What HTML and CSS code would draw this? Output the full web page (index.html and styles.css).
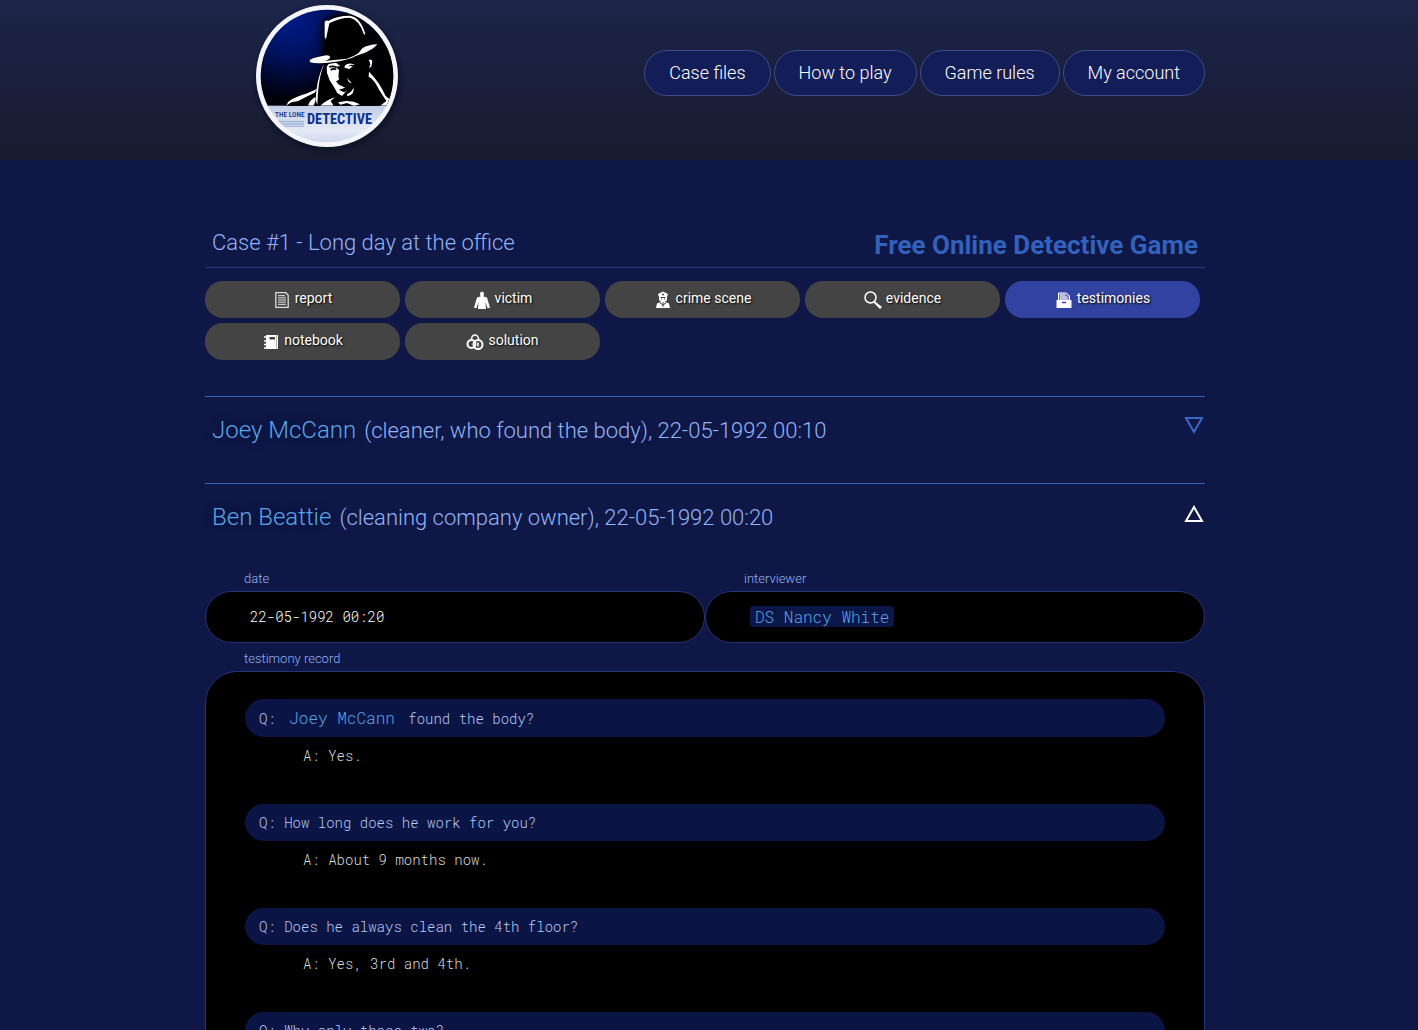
FILE: index.html
```html
<!DOCTYPE html>
<html lang="en">
<head>
<meta charset="utf-8">
<meta name="viewport" content="width=device-width, initial-scale=1">
<title>The Lone Detective</title>
<link rel="stylesheet" href="styles.css">
</head>
<body>
<div class="page">
<header class="site-header">
  <div class="wrap header-row">
    <a class="logo" href="#" aria-label="The Lone Detective">
      <svg viewBox="0 0 480 480" width="160" height="160">
        <defs>
          <radialGradient id="night" gradientUnits="userSpaceOnUse" cx="130" cy="50" r="250">
            <stop offset="0" stop-color="#001c8c"/><stop offset=".45" stop-color="#001262"/><stop offset="1" stop-color="#000008"/>
          </radialGradient>
          <linearGradient id="plate" x1="0" y1="0" x2="0" y2="1">
            <stop offset="0" stop-color="#c3cde6"/><stop offset=".6" stop-color="#e6eaf6"/><stop offset="1" stop-color="#c5cfe8"/>
          </linearGradient>
          <filter id="soft" x="-30%" y="-30%" width="160%" height="160%"><feGaussianBlur stdDeviation="10"/></filter>
          <clipPath id="disc"><circle cx="240" cy="228" r="199"/></clipPath>
          <clipPath id="scene"><rect x="30" y="15" width="420" height="302"/></clipPath>
        </defs>
        <circle cx="244" cy="236" r="212" fill="#05081a" opacity=".7" filter="url(#soft)"/>
        <circle cx="240" cy="228" r="213" fill="#f4f6fc"/>
        <g clip-path="url(#disc)">
          <rect x="30" y="15" width="420" height="303" fill="url(#night)"/>
          <rect x="30" y="317" width="420" height="125" fill="url(#plate)"/>
          <path d="M85 364h86M90 369h81M98 374h73M106 379h65" stroke="#7f97cf" stroke-width="2"/>
          <path d="M85 365Q160 440 260 427T420 330V440H60z" fill="#f7f9ff" opacity=".55"/>
          <g clip-path="url(#scene)">
            <path d="M224 165L222 70Q245 38 310 40Q350 48 372 130L440 130V320H120L205 270L230 190z" fill="#000" opacity=".75" filter="url(#soft)"/>
            <path d="M233 68Q244 50 278 46Q330 36 348 65L361 134L391 134Q376 158 363 166L382 220L418 285L440 320H118L130 294L205 270L232 187Q207 192 188 184Q192 176 231 168z" fill="#000"/>
            <path d="M233 65Q241 58 248 66Q243 87 237 118L233 112zM245 62Q270 47 309 47Q341 52 355 102L351 104Q338 60 309 53Q277 53 247 70z" fill="#fff"/>
            <path d="M188 181Q192 174 230 167Q242 163 250 170Q248 181 225 184L300 176Q320 170 334 160L346 145Q363 134 391 133Q379 148 354 158L326 168Q305 180 260 186Q213 193 189 187z" fill="#fff"/>
            <path d="M245 192L267 188L280 198L266 200L276 210L274 232Q282 238 267 244L276 254L295 263L275 269L292 277L301 270L285 288L270 278Q263 263 248 241L240 219L239 200z" fill="#fff"/>
            <path d="M247 201Q256 197 268 202M251 210Q259 204 268 208" stroke="#000" stroke-width="5" fill="none"/>
            <path d="M293 197Q307 185 325 195L313 194L302 199L318 198L307 207L293 203zM365 180Q374 175 376 184L373 200L366 204L370 194L368 185zM299 233L315 250L306 247zM300 283Q318 274 319 261Q325 284 301 289z" fill="#fff"/>
            <path d="M121 311Q123 297 177 281L210 267L203 278Q175 291 154 303L133 307L118 317zM183 317Q188 300 205 291L205 303L200 317zM230 197Q214 230 211 315L206 300Q208 240 229 196zM220 317Q238 300 264 292L251 303L260 317zM273 307L297 303Q318 302 339 313L321 318L300 309L280 314zM366 215Q396 244 416 288L427 297L431 317H400L418 303L397 271Q382 238 365 230z" fill="#fff"/>
          </g>
        </g>
        <text class="logo-small" x="84" y="352">THE LONE</text>
        <text class="logo-large" x="180" y="372">DETECTIVE</text>
      </svg>
    </a>
    <nav class="site-nav" aria-label="Main">
      <a href="#">Case files</a><a href="#">How to play</a><a href="#">Game rules</a><a href="#">My account</a>
    </nav>
  </div>
</header>
<main class="wrap">
  <div class="title-row">
    <h2>Case #1 - Long day at the office</h2>
    <h1>Free Online Detective Game</h1>
  </div>
  <nav class="tabs" aria-label="Case">
    <a href="#"><svg viewBox="0 0 18 18"><path d="M2.8 1.7h10l2.4 2.5v12.1H2.8z" fill="none" stroke="#ddd" stroke-width="1.3"/><path d="M5 4.5h7M5 6.3h8M5 8.1h8M5 9.9h8M5 11.7h8M5 13.5h8" stroke="#ccc"/></svg>report</a>
    <a href="#"><svg viewBox="0 0 18 18"><path d="M9 .5q2 0 2 2.500l-.5 2.500 3.500 1 1.500 5 1.500 5.500h-2.500L12.500 11l.5 7H5l.5-7L3.500 17H1l1.500-5.500 1.500-5 3.500-1L7 3Q7 .5 9 .5z" fill="#fff"/></svg>victim</a>
    <a href="#"><svg viewBox="0 0 18 18"><path d="M4 3l5-2.500L14 3l-1 3v3l-2 2 4 1.500 1 4.500H2l1-4.500L7 11 5 9V6z" fill="#fff"/><path d="M9 2.500v2M8 3.500h2M6.500 6.500h5M7 8h1M10 8h1M9 11v5M6 12l3 2 3-2" stroke="#444" fill="none"/></svg>crime scene</a>
    <a href="#"><svg viewBox="0 0 18 18"><circle cx="6.500" cy="6.500" r="5.500" fill="none" stroke="#fff" stroke-width="1.500"/><path d="M10.500 10l7.500 6-2 2-6.500-6.500z" fill="#fff"/></svg>evidence</a>
    <a href="#" class="active" aria-current="page"><svg viewBox="0 0 18 18"><path d="M3.500 9V2h8l3 3v4" fill="#7380c8" stroke="#fff"/><path d="M5 4h5M5 6h7M5 8h8" stroke="#fff"/><path d="M1.500 9h15v8h-15z" fill="#fff"/><path d="M7 11.500h4" stroke="#3443a0" stroke-width="1.500"/></svg>testimonies</a>
    <a href="#"><svg viewBox="0 0 18 18"><path d="M4 2h12v14H4z" fill="#fff"/><path d="M2 4h3M2 8h3M2 11.500h3M2 15h3" stroke="#fff" stroke-width="1.500"/><path d="M7.500 4h5.500v2.500H7.500z" fill="#444"/><path d="M14.500 2v14" stroke="#bbb"/></svg>notebook</a>
    <a href="#"><svg viewBox="0 0 18 18"><g fill="none" stroke="#fff"><circle cx="5.500" cy="11" r="4" stroke-width="2"/><circle cx="12" cy="11.500" r="4.500" stroke-width="2"/><path d="M5.500 6Q6 2 9 2t4 5M12 9.500v4" stroke-width="1.500"/></g></svg>solution</a>
  </nav>

  <section class="testimony">
    <div class="testimony-head">
      <h3><a class="person" href="#">Joey McCann</a>(cleaner, who found the body), 22-05-1992 00:10</h3>
      <button class="toggle" type="button" aria-label="Expand" aria-expanded="false"><svg viewBox="0 0 20 18"><path d="M2 2h16L10 16z"/></svg></button>
    </div>
  </section>

  <section class="testimony">
    <div class="testimony-head">
      <h3><a class="person" href="#">Ben Beattie</a>(cleaning company owner), 22-05-1992 00:20</h3>
      <button class="toggle open" type="button" aria-label="Collapse" aria-expanded="true"><svg viewBox="0 0 20 18"><path d="M2 16h16L10 2z"/></svg></button>
    </div>
    <dl class="fields">
      <div><dt>date</dt><dd>22-05-1992 00:20</dd></div>
      <div><dt>interviewer</dt><dd><a class="mention tagged" href="#">DS Nancy White</a></dd></div>
    </dl>
    <h4 class="field-label">testimony record</h4>
    <div class="record">
      <p class="question">Q: <a class="mention" href="#">Joey McCann</a> found the body?</p>
      <p class="answer">A: Yes.</p>
      <p class="question">Q: How long does he work for you?</p>
      <p class="answer">A: About 9 months now.</p>
      <p class="question">Q: Does he always clean the 4th floor?</p>
      <p class="answer">A: Yes, 3rd and 4th.</p>
      <p class="question">Q: Why only those two?</p>
    </div>
  </section>
</main>
</div>
</body>
</html>
```
FILE: styles.css
```css
* { box-sizing: border-box; }
body {
  margin: 0;
  background: #0e1745;
  color: #93b3f7;
  font: 300 22px/30px Roboto, "Liberation Sans", sans-serif;
}
h1, h2, h3, h4, p, dl, dd { margin: 0; font-weight: 300; }
a { color: inherit; text-decoration: none; }

.page { height: 100vh; overflow-y: auto; scrollbar-width: none; }
.wrap { width: calc(100% - 8px); max-width: 1000px; margin: 0 auto; }
.site-header, main { padding-right: 8px; }
main.wrap { max-width: 1008px; padding-top: 68px; }

.site-header { background: linear-gradient(#1c2549, #1a1e3a 60%, #181c2f); }
.header-row { display: flex; justify-content: space-between; padding-left: 42px; }
.logo svg { display: block; }
.logo-small, .logo-large { font-family: "Roboto Condensed", "Liberation Sans Narrow", Roboto, sans-serif; fill: #08308c; }
.logo-small { font-size: 22px; font-weight: 500; }
.logo-large { font-size: 43px; font-weight: 700; }

.site-nav { display: flex; gap: 3px; margin-top: 50px; height: 46px; }
.site-nav a {
  padding: 0 24px;
  border: 1px solid #424b8c;
  border-radius: 23px;
  background: #131d58;
  color: #fff;
  font-size: 18px;
  line-height: 44px;
}

.title-row {
  display: flex;
  justify-content: space-between;
  height: 40px;
  padding: 0 7px;
  border-bottom: 1px solid #2b377b;
}
.title-row h2 { font-size: 22px; }
.title-row h1 { font-size: 26px; line-height: 34px; font-weight: 700; color: #3262bd; }

.tabs { display: flex; flex-wrap: wrap; gap: 5px; margin: 13px 0 36px; }
.tabs a {
  display: flex;
  align-items: center;
  justify-content: center;
  gap: 4px;
  width: 195px;
  height: 37px;
  border-radius: 18px;
  background: #444;
  color: #fff;
  font-size: 14px;
  font-weight: 400;
  line-height: 35px;
  padding-bottom: 2px;
  text-shadow: 1px 1px 2px #000;
}
.tabs a.active { background: #3142a0; }
.tabs svg { width: 18px; height: 18px; margin-top: 2px; }

.testimony { border-top: 1px solid #3465b8; }
.testimony-head { display: flex; justify-content: space-between; align-items: flex-start; height: 86px; padding-top: 18px; }
.testimony-head h3 { padding-left: 7px; font-size: 22px; }
.person { margin-right: 8px; color: #5ba5e4; font-size: 24px; text-shadow: 0 0 8px #02103c; }
.toggle { width: 22px; padding: 1px; border: 0; background: none; color: #3869c8; cursor: pointer; }
.toggle svg { display: block; width: 20px; height: 18px; fill: none; stroke: currentColor; stroke-width: 2; }
.toggle.open { padding-top: 3px; color: #fff; }

.fields { display: grid; grid-template-columns: 1fr 1fr; }
.fields dt, .field-label { padding: 0 0 4px 39px; font-size: 13px; line-height: 17px; }
.fields dd {
  height: 52px;
  padding: 0 44px;
  border: 1px solid #26327a;
  border-radius: 26px;
  background: #000;
  color: #fff;
  font: 300 14px/50px "Roboto Mono", "Liberation Mono", monospace;
}
.mention { color: #5ba5e4; font-size: 16px; }
.tagged { padding: 0 5px; border-radius: 4px; background: #0b1748; }
.field-label { margin-top: 7px; }

.record {
  padding: 27px 39px;
  border: 1px solid #26327a;
  border-radius: 32px;
  background: #000;
  font: 300 14px/37px "Roboto Mono", "Liberation Mono", monospace;
}
.question { padding-left: 14px; border-radius: 19px; background: #0a1546; color: #bccbf5; }
.question .mention { margin: 0 5px; }
.answer { padding-left: 58px; margin-bottom: 29px; line-height: 38px; color: #ddd; }
```
